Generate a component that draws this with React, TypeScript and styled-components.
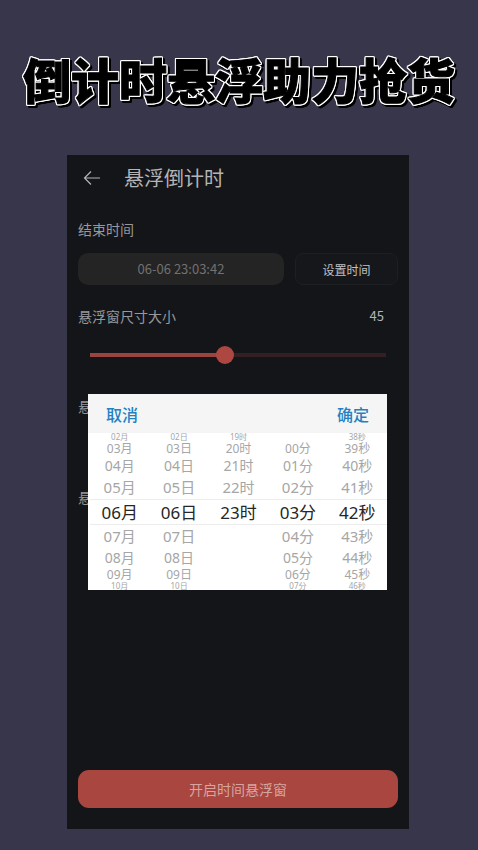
import React, { useState } from "react";
import styled, { createGlobalStyle } from "styled-components";

const GlobalStyle = createGlobalStyle`
  *, *::before, *::after { box-sizing: border-box; }
  body {
    margin: 0;
    background: #37364a;
    font-family: "Noto Sans CJK SC", "Noto Sans", sans-serif;
  }
  button { font-family: inherit; padding: 0; cursor: pointer; }
`;

const Page = styled.div`
  min-height: 100vh;
  display: flex;
  flex-direction: column;
  background: #37364a;
  padding: 42px 0 21px;
`;

const Headline = styled.h1`
  margin: 0 0 41px;
  font-size: 48px;
  line-height: 72px;
  font-weight: 900;
  text-align: center;
  white-space: nowrap;
  color: #000;
  -webkit-text-stroke: 1px #000;
  filter: drop-shadow(1px 0 0 #fff) drop-shadow(-1px 0 0 #fff)
    drop-shadow(0 1px 0 #fff) drop-shadow(0 -1px 0 #fff)
    drop-shadow(2px 2px 0 #000);
`;

const Phone = styled.main`
  position: relative;
  flex: 1;
  display: flex;
  flex-direction: column;
  margin: 0 69px 0 67px;
  padding: 0 11px 21px;
  background: #141519;
  color: #98989a;
`;

const TopBar = styled.header`
  display: flex;
  align-items: center;
  gap: 22px;
  height: 46px;
  padding-left: 4px;
`;

const BackButton = styled.button`
  display: flex;
  border: 0;
  background: none;
  color: #b4b4b6;
`;

const Title = styled.h2`
  margin: 0;
  font-size: 20px;
  line-height: 28px;
  font-weight: 400;
  color: #b4b4b6;
`;

const FieldRow = styled.div`
  display: flex;
  justify-content: space-between;
  align-items: center;
  height: 24px;
  padding-right: 14px;
  font-size: 14px;
  line-height: 24px;
`;

const EndSection = styled.section`
  padding-top: 16px;
`;

const TimeRow = styled.div`
  display: flex;
  gap: 11px;
  margin-top: 12px;
`;

const TimeField = styled.input`
  flex: 1;
  min-width: 0;
  height: 32px;
  padding: 0;
  border: 0;
  border-radius: 10px;
  background: #242424;
  color: #717171;
  font: 13px/32px "Noto Sans CJK SC", "Noto Sans", sans-serif;
  text-align: center;
`;

const SetButton = styled.button`
  width: 103px;
  height: 32px;
  border: 1px solid #1e1f22;
  border-radius: 8px;
  background: #16171b;
  color: #c0c0c2;
  font-size: 12px;
`;

const SizeSection = styled.section`
  padding-top: 19px;
`;

const SizeValue = styled.output`
  font-size: 13px;
  color: #b4b4b6;
`;

const Slider = styled.input<{ $fill: number }>`
  display: block;
  appearance: none;
  width: calc(100% - 24px);
  height: 18px;
  margin: 18px 12px 0;
  background: linear-gradient(to right, #99443f ${(p) => p.$fill}%, #342022 ${(p) => p.$fill}%) center / 100% 4px no-repeat;
  &::-webkit-slider-thumb {
    appearance: none;
    width: 18px;
    height: 18px;
    border-radius: 50%;
    background: #ad4742;
  }
`;

const CoveredSection = styled.section<{ $gap: number }>`
  padding-top: ${(p) => p.$gap}px;
`;

const StartButton = styled.button`
  height: 38px;
  margin-top: auto;
  border: 0;
  border-radius: 11px;
  background: #a94640;
  color: #d6a5a0;
  font-size: 14px;
`;

const Dialog = styled.div`
  position: absolute;
  top: 239px;
  left: 21px;
  right: 22px;
  background: #fff;
`;

const DialogBar = styled.div`
  display: flex;
  justify-content: space-between;
  align-items: center;
  height: 39px;
  padding: 0 18px;
  background: #f5f5f5;
`;

const DialogAction = styled.button`
  border: 0;
  background: none;
  color: #1f82c2;
  font-size: 16px;
  line-height: 24px;
  font-weight: 500;
`;

const Wheels = styled.div`
  display: grid;
  grid-template-columns: repeat(5, 1fr);
  padding-left: 2px;
`;

const Wheel = styled.ul`
  margin: 0;
  padding: 0;
  list-style: none;
  text-align: center;
  font-family: "Noto Sans", "Noto Sans CJK SC", sans-serif;
`;

const WheelItem = styled.li<{ $height: number; $size: number; $selected: boolean }>`
  display: flex;
  align-items: center;
  justify-content: center;
  height: ${(p) => p.$height}px;
  overflow: hidden;
  font-size: ${(p) => p.$size}px;
  line-height: 1;
  color: ${(p) => (p.$selected ? "#262626" : "#a6a6a6")};
  border: solid #ececec;
  border-width: ${(p) => (p.$selected ? "1px 0" : "0")};
`;

const SLOTS = [
  { height: 8, size: 8 },
  { height: 15, size: 12 },
  { height: 20, size: 14 },
  { height: 23, size: 15 },
  { height: 26, size: 17 },
  { height: 23, size: 15 },
  { height: 20, size: 14 },
  { height: 14, size: 12 },
  { height: 8, size: 8 },
];

const pad = (n: number) => String(n).padStart(2, "0");

const COLUMNS = [
  { name: "月", value: 6, min: 1, max: 12 },
  { name: "日", value: 6, min: 1, max: 30 },
  { name: "时", value: 23, min: 0, max: 23 },
  { name: "分", value: 3, min: 0, max: 59 },
  { name: "秒", value: 42, min: 0, max: 59 },
];

export default function App() {
  const [size, setSize] = useState(45);
  return (
    <>
      <GlobalStyle />
      <Page>
        <Headline>倒计时悬浮助力抢货</Headline>
        <Phone>
          <TopBar>
            <BackButton aria-label="返回">
              <svg width="20" height="20" viewBox="0 0 20 20" fill="none" stroke="currentColor" strokeWidth="1.2">
                <path d="M18 10H2.5M9 3.5L2.5 10L9 16.5" />
              </svg>
            </BackButton>
            <Title>悬浮倒计时</Title>
          </TopBar>
          <EndSection>
            <FieldRow as="label" htmlFor="end-time">结束时间</FieldRow>
            <TimeRow>
              <TimeField id="end-time" readOnly value="06-06 23:03:42" />
              <SetButton>设置时间</SetButton>
            </TimeRow>
          </EndSection>
          <SizeSection>
            <FieldRow>
              <label htmlFor="size">悬浮窗尺寸大小</label>
              <SizeValue htmlFor="size">{size}</SizeValue>
            </FieldRow>
            <Slider
              id="size"
              type="range"
              min={0}
              max={99}
              value={size}
              $fill={(size / 99) * 100}
              onChange={(e) => setSize(Number(e.target.value))}
            />
          </SizeSection>
          <CoveredSection $gap={30}>
            <FieldRow>悬浮窗</FieldRow>
          </CoveredSection>
          <CoveredSection $gap={67}>
            <FieldRow>悬浮窗</FieldRow>
          </CoveredSection>
          <StartButton>开启时间悬浮窗</StartButton>
          <Dialog role="dialog" aria-label="设置时间">
            <DialogBar>
              <DialogAction>取消</DialogAction>
              <DialogAction>确定</DialogAction>
            </DialogBar>
            <Wheels>
              {COLUMNS.map((c) => (
                <Wheel key={c.name}>
                  {SLOTS.map((slot, i) => {
                    const n = c.value + i - 4;
                    return (
                      <WheelItem key={i} $height={slot.height} $size={slot.size} $selected={i === 4}>
                        {n >= c.min && n <= c.max ? pad(n) + c.name : ""}
                      </WheelItem>
                    );
                  })}
                </Wheel>
              ))}
            </Wheels>
          </Dialog>
        </Phone>
      </Page>
    </>
  );
}
